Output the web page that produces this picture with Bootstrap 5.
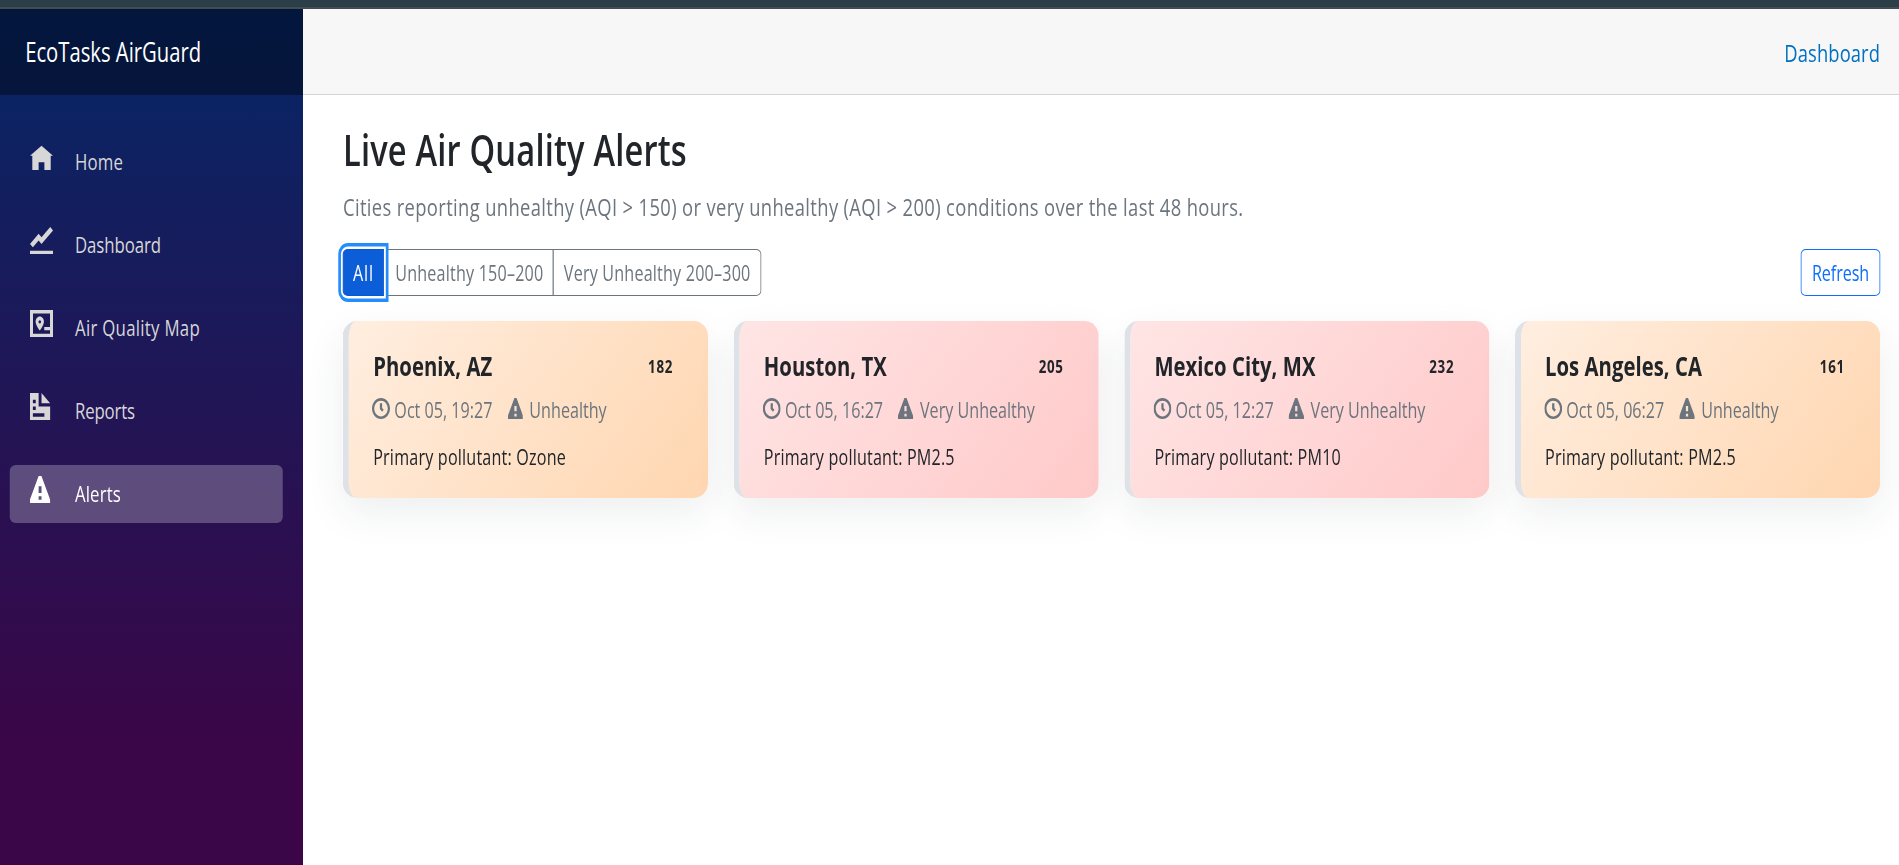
<!DOCTYPE html>
<html lang="en">
<head>
<meta charset="utf-8">
<title>EcoTasks AirGuard</title>
<link href="https://cdn.jsdelivr.net/npm/bootstrap@5.3.0/dist/css/bootstrap.min.css" rel="stylesheet">
<style>
  body { margin: 0; font-family: "Open Sans", "Noto Sans", sans-serif; color: #212529; background: #fff; }
  .frame { width: 1899px; height: 865px; overflow: hidden; contain: strict; }
  /* The page is laid out wide and condensed horizontally */
  .page { width: 2532px; height: 865px; transform: scaleX(.75); transform-origin: 0 0; overflow: hidden; white-space: nowrap; }
  .top-strip { height: 9px; background: #2b3f48; border-bottom: 2px solid #454b4e; flex: none; }
  .sidebar { width: 404px; flex: none; background: linear-gradient(180deg, rgb(5,39,103) 0, #3a0647 735px); }
  .brand-bar { height: 86px; padding-left: 33.5px; background: rgba(0,0,0,.4); font-size: 27px; color: #fff; line-height: 40px; padding-top: 23px; }
  .side-nav { padding: 38px 26.7px 0 13.3px; gap: 25px; }
  .side-link { height: 58px; padding: 0 0 0 26.7px; border-radius: 8px / 6px; color: #d7d7d7; font-size: 22.4px; line-height: 58px; text-decoration: none; display: flex; }
  .side-link svg { width: 30.7px; height: 27px; margin: 11px 29.3px 0 0; flex: none; fill: currentColor; }
  .side-link.active { background: rgba(255,255,255,.25); color: #fff; }
  .top-row { height: 86px; background: #f7f7f7; border-bottom: 1px solid #d6d5d5; padding: 0 25.3px 0 0; }
  .top-row a { color: #0071c1; font-size: 24.5px; line-height: 36px; padding-top: 3px; letter-spacing: .005em; text-decoration: none; }
  .content-area { padding: 0 25.3px 0 53.3px; }
  h1.page-title { font-size: 43.5px; font-weight: 600; line-height: 52px; letter-spacing: .006em; margin: 29px 0 0; }
  .lede { font-size: 24.5px; line-height: 36px; letter-spacing: .0195em; color: #6c757d; margin: 13px 0 0; }
  .tools { margin-top: 24px; height: 47px; }
  .tools .btn { height: 47px; padding: 0; font-size: 21.5px; line-height: 44px; border-width: 1px; border-radius: 7px / 5px; letter-spacing: .012em; }
  .tools .btn-group .btn { border-right-width: 1.34px; border-left-width: 1.34px; }
  .tools .pick-all { width: 54.7px; letter-spacing: .05em; background: #0b5ed7; border-color: #0a58ca; color: #fff; box-shadow: 0 0 0 2.4px #fff, 0 0 0 6px #258cfb; z-index: 2; }
  .tools .pick-mid { width: 227.5px; padding-left: 2px; }
  .tools .pick-last { width: 277.5px; }
  .tools .btn-refresh { width: 105.3px; letter-spacing: -.005em; border-right-width: 1.34px; border-left-width: 1.34px; }
  .alert-grid { display: grid; grid-template-columns: repeat(4, 1fr); gap: 33.8px; margin-top: 25px; }
  .alert-tile { height: 177px; border-left: 8px solid #dee2e6; border-radius: 19px / 15px; padding: 27px 33.8px 0 32.3px; box-shadow: 0 15px 46px rgba(33,52,55,.08); }
  .tile-warm { background: linear-gradient(135deg, #ffeee0, #ffd6b0); }
  .tile-hot { background: linear-gradient(135deg, #ffe5e5, #ffc9c9); }
  .tile-city { font-size: 27px; font-weight: 700; line-height: 36px; letter-spacing: .003em; }
  .tile-aqi { font-size: 17.8px; font-weight: 700; line-height: 36px; letter-spacing: .055em; padding-right: 13px; }
  .tile-meta { font-size: 21.5px; line-height: 30px; color: #6c757d; margin-top: 11px; }
  .tile-meta svg { height: 21px; flex: none; fill: currentColor; }
  .tile-meta .ico-clock { width: 24px; margin: 3px 5.5px 0 -1.3px; }
  .tile-meta .ico-warn { width: 20.7px; margin: 3px 8.5px 0 20px; }
  .tile-text { font-size: 21.5px; line-height: 30px; letter-spacing: .012em; margin-top: 17px; }
</style>
</head>
<body>
<svg class="d-none" aria-hidden="true">
  <symbol id="i-home" viewBox="0 0 8 8" preserveAspectRatio="none"><path d="M4 .5l-4 3h.8v4.2h2.2v-2.3h2v2.3h2.2v-4.2h.8z"/></symbol>
  <symbol id="i-graph" viewBox="0 0 8 8" preserveAspectRatio="none"><path d="M7.03 0l-3.03 3-1-1-3 3.03 1 1 2-2.03 1 1 4-4-.97-1zm-7.03 7v1h8v-1h-8z"/></symbol>
  <symbol id="i-map" viewBox="0 0 8 8" preserveAspectRatio="none"><path fill-rule="evenodd" d="M0 0h8v8h-8zM1.05 1v6h5.9v-1h-2v-1h2v-4zM3.4 1.9c.83 0 1.45.7 1.45 1.6 0 1-1.45 2.6-1.45 2.6s-1.45-1.6-1.45-2.6c0-.9.62-1.6 1.45-1.6zM3.4 3a.45.5 0 0 0 0 1 .45.5 0 0 0 0-1z"/></symbol>
  <symbol id="i-doc" viewBox="0 0 8 8" preserveAspectRatio="none"><path d="M0 0v8h7v-4h-4v-4h-3zm4 0v3h3l-3-3zm-3 2h1v1h-1v-1zm0 2h1v1h-1v-1zm0 2h4v1h-4v-1z"/></symbol>
  <symbol id="i-warn" viewBox="0 0 8 8" preserveAspectRatio="none"><path d="M3.09 0c-.06 0-.1.04-.13.09l-2.94 6.81c-.02.05-.03.13-.03.19v.81c0 .05.04.09.09.09h6.81c.05 0 .09-.04.09-.09v-.81c0-.05-.01-.14-.03-.19l-2.94-6.81c-.02-.05-.07-.09-.13-.09h-.81zm-.09 3h1v2h-1v-2zm0 3h1v1h-1v-1z"/></symbol>
  <symbol id="i-warn7" viewBox="0 0 7 8" preserveAspectRatio="none"><path d="M3.09 0c-.06 0-.1.04-.13.09l-2.94 6.81c-.02.05-.03.13-.03.19v.81c0 .05.04.09.09.09h6.81c.05 0 .09-.04.09-.09v-.81c0-.05-.01-.14-.03-.19l-2.94-6.81c-.02-.05-.07-.09-.13-.09h-.81zm-.09 3h1v2h-1v-2zm0 3h1v1h-1v-1z"/></symbol>
  <symbol id="i-clock" viewBox="0 0 8 8" preserveAspectRatio="none"><path d="M4 0c-2.2 0-4 1.8-4 4s1.8 4 4 4 4-1.8 4-4-1.8-4-4-4zm0 1c1.66 0 3 1.34 3 3s-1.34 3-3 3-3-1.34-3-3 1.34-3 3-3zm-.5 1v2.22l.16.13.5.5.34.38.72-.72-.38-.34-.34-.34v-1.81h-1z"/></symbol>
</svg>
<div class="frame">
<div class="page d-flex flex-column">
  <div class="top-strip"></div>
  <div class="d-flex flex-grow-1">
    <aside class="sidebar">
      <div class="brand-bar">EcoTasks AirGuard</div>
      <nav class="side-nav d-flex flex-column">
        <a class="side-link" href="#"><svg><use href="#i-home"/></svg><span style="letter-spacing:.008em">Home</span></a>
        <a class="side-link" href="#"><svg><use href="#i-graph"/></svg><span style="letter-spacing:-.004em">Dashboard</span></a>
        <a class="side-link" href="#"><svg><use href="#i-map"/></svg><span style="letter-spacing:.017em">Air Quality Map</span></a>
        <a class="side-link" href="#"><svg><use href="#i-doc"/></svg><span style="letter-spacing:-.009em">Reports</span></a>
        <a class="side-link active" href="#"><svg><use href="#i-warn"/></svg><span style="letter-spacing:.008em">Alerts</span></a>
      </nav>
    </aside>
    <main class="flex-grow-1">
      <div class="top-row d-flex justify-content-end align-items-center"><a href="#">Dashboard</a></div>
      <div class="content-area">
        <h1 class="page-title">Live Air Quality Alerts</h1>
        <p class="lede">Cities reporting unhealthy (AQI &gt; 150) or very unhealthy (AQI &gt; 200) conditions over the last 48 hours.</p>
        <div class="tools d-flex justify-content-between">
          <div class="btn-group btn-group-sm">
            <button class="btn pick-all flex-grow-0">All</button>
            <button class="btn btn-outline-secondary pick-mid flex-grow-0">Unhealthy 150–200</button>
            <button class="btn btn-outline-secondary pick-last flex-grow-0">Very Unhealthy 200–300</button>
          </div>
          <button class="btn btn-sm btn-outline-primary btn-refresh">Refresh</button>
        </div>
        <div class="alert-grid">
          <article class="alert-tile tile-warm">
            <div class="d-flex justify-content-between"><div class="tile-city">Phoenix, AZ</div><div class="tile-aqi">182</div></div>
            <div class="tile-meta d-flex"><svg class="ico-clock"><use href="#i-clock"/></svg><span>Oct 05, 19:27</span><svg class="ico-warn"><use href="#i-warn7"/></svg><span>Unhealthy</span></div>
            <div class="tile-text">Primary pollutant: Ozone</div>
          </article>
          <article class="alert-tile tile-hot">
            <div class="d-flex justify-content-between"><div class="tile-city">Houston, TX</div><div class="tile-aqi">205</div></div>
            <div class="tile-meta d-flex"><svg class="ico-clock"><use href="#i-clock"/></svg><span>Oct 05, 16:27</span><svg class="ico-warn"><use href="#i-warn7"/></svg><span>Very Unhealthy</span></div>
            <div class="tile-text">Primary pollutant: PM2.5</div>
          </article>
          <article class="alert-tile tile-hot">
            <div class="d-flex justify-content-between"><div class="tile-city">Mexico City, MX</div><div class="tile-aqi">232</div></div>
            <div class="tile-meta d-flex"><svg class="ico-clock"><use href="#i-clock"/></svg><span>Oct 05, 12:27</span><svg class="ico-warn"><use href="#i-warn7"/></svg><span>Very Unhealthy</span></div>
            <div class="tile-text">Primary pollutant: PM10</div>
          </article>
          <article class="alert-tile tile-warm">
            <div class="d-flex justify-content-between"><div class="tile-city">Los Angeles, CA</div><div class="tile-aqi">161</div></div>
            <div class="tile-meta d-flex"><svg class="ico-clock"><use href="#i-clock"/></svg><span>Oct 05, 06:27</span><svg class="ico-warn"><use href="#i-warn7"/></svg><span>Unhealthy</span></div>
            <div class="tile-text">Primary pollutant: PM2.5</div>
          </article>
        </div>
      </div>
    </main>
  </div>
</div>
</div>
<script src="https://cdn.jsdelivr.net/npm/bootstrap@5.3.0/dist/js/bootstrap.bundle.min.js"></script>
</body>
</html>
